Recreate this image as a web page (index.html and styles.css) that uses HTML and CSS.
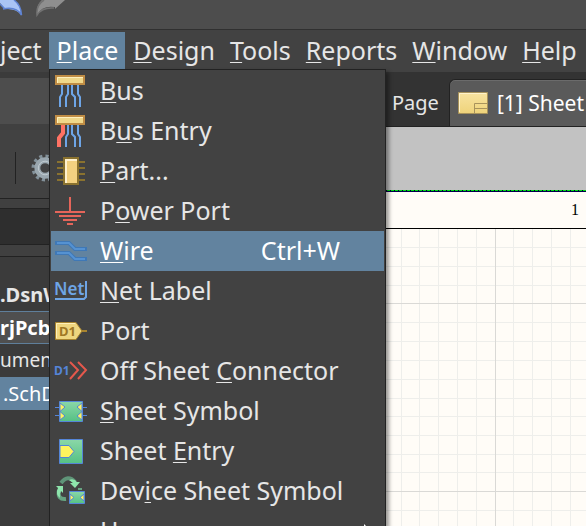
FILE: index.html
```html
<!DOCTYPE html>
<html lang="en">
<head>
<meta charset="utf-8">
<title>Schematic editor</title>
<link rel="stylesheet" href="styles.css">
</head>
<body>
<header class="toolbar">
  <svg class="history" width="70" height="29" viewBox="0 0 70 29" aria-hidden="true">
    <path d="M0 0H14Q21 5 21.500 15Q16 8 5 9L0 3Z" fill="#a9c4f5"/>
    <path d="M14 0Q21 5 21.500 15Q16 6 3 9M5 9L0 4" fill="none" stroke="#5f83d3" stroke-width="1.500"/>
    <path d="M42 0H65L55 9V7Q42 5 37 15Q36 5 42 0Z" fill="#8f8f8f"/>
    <path d="M44 0Q36 5 37 15Q42 7 54 8" fill="none" stroke="#727272" stroke-width="1.500"/>
  </svg>
</header>
<nav class="menubar">
  <button class="menu-title">je<u>c</u>t</button>
  <button class="menu-title open"><u>P</u>lace</button>
  <button class="menu-title"><u>D</u>esign</button>
  <button class="menu-title"><u>T</u>ools</button>
  <button class="menu-title"><u>R</u>eports</button>
  <button class="menu-title"><u>W</u>indow</button>
  <button class="menu-title"><u>H</u>elp</button>
</nav>
<main class="workspace">
  <aside class="projects">
    <div class="panel-title"></div>
    <div class="panel-tools">
      <svg width="34" height="32" viewBox="0 0 34 32" aria-hidden="true">
        <circle cx="30" cy="16" r="11.500" fill="none" stroke="#83919a" stroke-width="5" stroke-dasharray="3 3.020"/>
        <circle cx="30" cy="16" r="8" fill="none" stroke="#9aa7af" stroke-width="6"/>
        <circle cx="30" cy="16" r="7" fill="none" stroke="#c1cbd1" stroke-width="1"/>
      </svg>
    </div>
    <div class="panel-search"></div>
    <div class="panel-strip"></div>
    <ul class="tree">
      <li class="strong">.DsnW</li>
      <li class="strong project">rjPcb</li>
      <li class="folder">ument</li>
      <li class="selected">.SchD</li>
    </ul>
  </aside>
  <section class="editor">
    <div class="tabs">
      <button class="tab">Page</button>
      <button class="tab active">
        <svg width="30" height="22" viewBox="0 0 30 22" aria-hidden="true">
          <defs><linearGradient id="sheet" x2="0" y2="1"><stop stop-color="#f7e3a1"/><stop offset="1" stop-color="#efd37a"/></linearGradient></defs>
          <path d="M.5 .5H29.500V21.500H.5Z" fill="url(#sheet)" stroke="#a8935c"/>
          <path d="M1.500 20V1.500H28" fill="none" stroke="#fff3cb"/>
          <path d="M16.500 21V11.500H29M17 16.500H29" fill="none" stroke="#a8935c"/>
        </svg>
        <span>[1] Sheet</span>
      </button>
    </div>
    <div class="desk"></div>
    <div class="zone">1</div>
    <svg class="grid" aria-hidden="true">
      <path class="minor" d="M15.500 0V400M33.500 0V400M52.500 0V400M71.500 0V400M90.500 0V400M127.500 0V400M146.500 0V400M165.500 0V400M184.500 0V400M0 18.500H400M0 37.500H400M0 56.500H400M0 93.500H400M0 112.500H400M0 131.500H400M0 150.500H400M0 169.500H400M0 187.500H400M0 206.500H400M0 225.500H400M0 243.500H400M0 281.500H400"/>
      <path class="major" d="M109.500 0V400M0 74.500H400M0 262.500H400"/>
    </svg>
  </section>
</main>
<div class="menu" role="menu">
  <button class="item" role="menuitem">
    <svg class="icon" viewBox="0 0 32 32" aria-hidden="true"><path id="bar" d="M1 1H29V9H1Z" fill="#f0d88a" stroke="#c08d45" stroke-width="2"/><path d="M2.500 8V2.500H28" fill="none" stroke="#fff0bd"/><g fill="none" stroke="#6ea5e6" stroke-width="2"><path d="M7 10V19L5 22V32M13 10V19L11 22V32"/><path d="M17 10V19L20 22V32M23 10V19L25 22V32"/></g></svg>
    <span class="label"><u>B</u>us</span></button>
  <button class="item" role="menuitem">
    <svg class="icon" viewBox="0 0 32 32" aria-hidden="true"><use href="#bar"/><path d="M2.500 8V2.500H28" fill="none" stroke="#fff0bd"/><g fill="none" stroke="#6ea5e6" stroke-width="2"><path d="M13 10V19L11 22V32"/><path d="M17 10V19L20 22V32M23 10V19L25 22V32"/></g><path d="M8 10V18L4 23V32" fill="none" stroke="#ff7264" stroke-width="4"/></svg>
    <span class="label">B<u>u</u>s Entry</span></button>
  <button class="item" role="menuitem">
    <svg class="icon" viewBox="0 0 32 32" aria-hidden="true"><path d="M2 7H30M2 13H30M2 19H30M2 25H30" stroke="#8a722f" stroke-width="2"/><path d="M9 3H23V29H9Z" fill="#f3d180" stroke="#8a722f" stroke-width="2"/><path d="M11 28V5H22" fill="none" stroke="#fff1cf" stroke-width="2"/></svg>
    <span class="label"><u>P</u>art...</span></button>
  <button class="item" role="menuitem">
    <svg class="icon" viewBox="0 0 32 32" aria-hidden="true"><path d="M15 2V16M0 17H30M4 21H26M8 25H22M12 29H18" fill="none" stroke="#e5655a" stroke-width="2"/></svg>
    <span class="label">P<u>o</u>wer Port</span></button>
  <button class="item hot" role="menuitem">
    <svg class="icon" viewBox="0 0 32 32" aria-hidden="true"><g fill="none" stroke="#3f78b6" stroke-width="4"><path d="M0 8H14L20 14H32M0 18H14L20 24H32"/></g><g fill="none" stroke="#5592d2" stroke-width="2"><path d="M2 8H14L20 14H30M2 18H14L20 24H30"/></g></svg>
    <span class="label"><u>W</u>ire</span><kbd>Ctrl+W</kbd></button>
  <button class="item" role="menuitem">
    <svg class="icon" viewBox="0 0 32 32" aria-hidden="true"><text class="net" x="-1" y="20">Net</text><path d="M0 24H29L31 22V6" fill="none" stroke="#6ea5e6" stroke-width="2"/></svg>
    <span class="label"><u>N</u>et Label</span></button>
  <button class="item" role="menuitem">
    <svg class="icon" viewBox="0 0 32 32" aria-hidden="true"><path d="M26 16H32" stroke="#a8842f" stroke-width="2"/><path d="M.5 7.500H21L27 16L21 24.500H.5Z" fill="#efd67f" stroke="#a8842f"/><path d="M1.500 23V8.500H20" fill="none" stroke="#fff0b8"/><text class="pin" x="4" y="21">D1</text></svg>
    <span class="label">Port</span></button>
  <button class="item" role="menuitem">
    <svg class="icon" viewBox="0 0 32 32" aria-hidden="true"><text class="ref" x="-1" y="20">D1</text><path d="M15 7L23 15L15 24M23 7L31 15L23 24" fill="none" stroke="#e5584c" stroke-width="2"/></svg>
    <span class="label">Off Sheet <u>C</u>onnector</span></button>
  <button class="item" role="menuitem">
    <svg class="icon" viewBox="0 0 32 32" aria-hidden="true"><defs><linearGradient id="green" x2="0" y2="1"><stop stop-color="#8bd7a8"/><stop offset="1" stop-color="#55c184"/></linearGradient></defs><path d="M0 12.500H32M0 20.500H32" stroke="#5585d8"/><path d="M4.500 6.500H27.500V26.500H4.500Z" fill="url(#green)" stroke="#5585d8"/><path d="M5 8L10 12L5 16.500L10 21L5 25ZM27 8L22 12L27 16.500L22 21L27 25Z" fill="#fff45e" stroke="#5585d8"/></svg>
    <span class="label"><u>S</u>heet Symbol</span></button>
  <button class="item" role="menuitem">
    <svg class="icon" viewBox="0 0 32 32" aria-hidden="true"><path d="M4.500 4.500H27.500V28.500H4.500Z" fill="url(#green)" stroke="#5585d8"/><path d="M5 10.500H14L19 16.500L14 22.500H5Z" fill="#fff45e" stroke="#5585d8"/></svg>
    <span class="label">Sheet <u>E</u>ntry</span></button>
  <button class="item" role="menuitem">
    <svg class="icon" viewBox="0 0 32 32" aria-hidden="true"><path d="M6 8Q13 -1 20 7" fill="none" stroke="#5f9478" stroke-width="4"/><path d="M14 5Q19 3 22 7H25L20 13L15 8H18Z" fill="#8ee5ac"/><path d="M11 24Q2 25 4 15" fill="none" stroke="#66a381" stroke-width="4"/><path d="M1 11H8V18L6 16Q4 19 5 23Q0 19 3 13Z" fill="#8ee5ac"/><path d="M14.500 16.500H29.500V28.500H14.500Z" fill="url(#green)" stroke="#5585d8"/><path d="M15 19L19 22.500L15 26ZM29 19L25 22.500L29 26Z" fill="#fff45e" stroke="#5585d8"/><path d="M23 14H27" stroke="#66a381" stroke-width="2"/></svg>
    <span class="label">Dev<u>i</u>ce Sheet Symbol</span></button>
  <button class="item" role="menuitem">
    <span class="icon"></span>
    <span class="label">H</span></button>
</div>
<svg class="pointer" width="12" height="18" viewBox="0 0 12 18" aria-hidden="true"><path d="M0 0V16L4 12L7 18L9 17L6 11H11Z" fill="#fff"/></svg>
</body>
</html>
```
FILE: styles.css
```css
* { box-sizing: border-box; }

body {
  margin: 0;
  height: 100vh;
  overflow: hidden;
  display: flex;
  flex-direction: column;
  position: relative;
  background: #333;
  color: #e6e6e6;
  font-family: "Noto Sans", sans-serif;
  font-size: 25px;
}

button {
  border: 0;
  margin: 0;
  background: none;
  color: inherit;
  font: inherit;
  text-align: left;
  white-space: nowrap;
}

svg { display: block; flex: none; }

u { text-decoration-thickness: 1px; text-underline-offset: 2px; text-decoration-skip-ink: none; }

.toolbar { height: 30px; background: #4d4d4d; border-bottom: 1px solid #303030; }

.menubar {
  display: flex;
  height: 42px;
  padding-top: 2px;
  background: #424242;
}
.menu-title { height: 37px; padding: 0 7px 0 8px; line-height: 37px; }
.menu-title:first-child { padding-left: 0; }
.menu-title.open { background: #62839f; color: #fff; }

.workspace { flex: 1; min-height: 0; display: flex; }

.projects { flex: 0 0 386px; overflow: hidden; background: #3b3b3b; font-size: 20px; }
.panel-title { height: 52px; margin-top: 6px; background: #4d4d4d; border-bottom: 6px solid #404040; }
.panel-tools {
  display: flex;
  align-items: center;
  height: 69px;
  padding: 8px 0 0 15px;
  background: #424242;
  border-bottom: 1px solid #222;
}
.panel-tools svg { border-left: 1px solid #222; }
.panel-search {
  height: 46px;
  background: #2e2e2e;
  border-top: 9px solid #404040;
  border-bottom: 1px solid #222;
  box-shadow: inset 0 1px #222;
}
.panel-strip { height: 12px; border-bottom: 1px solid #222; background: #404040; }

.tree { margin: 21px 0 0; padding: 0; list-style: none; }
.tree li { height: 33px; line-height: 33px; white-space: nowrap; }
.tree .strong { font-weight: 700; }
.tree .project { background: #4f4f4f; border: solid #5f7f9b; border-width: 1px 0; color: #fff; line-height: 31px; }
.tree .folder { font-size: 19px; }
.tree .selected { padding-left: 3px; background: #62839f; color: #fff; }

.editor { flex: 1; min-width: 0; display: flex; flex-direction: column; background: #fffcf7; }
.tabs { display: flex; height: 55px; padding-top: 7px; background: #333; border-bottom: 1px solid #222; }
.tab { flex: none; height: 47px; padding: 0 10px 0 6px; font-size: 20px; line-height: 47px; }
.tab.active {
  flex: 1;
  min-width: 0;
  display: flex;
  align-items: center;
  gap: 9px;
  padding: 0 0 0 8px;
  border: 1px solid #222;
  border-width: 1px 0 0 1px;
  border-radius: 6px 0 0 0;
  background: #5a5a5a;
  box-shadow: inset 0 1px #6b6b6b;
  color: #fff;
  font-size: 21px;
  line-height: 45px;
}
.desk {
  height: 64px;
  background: repeating-linear-gradient(90deg, #00003c 0 1px, #00e010 1px 4px) bottom / 100% 1px no-repeat #c2c2c2;
}
.zone {
  height: 38px;
  padding-right: 7px;
  border-top: 1px solid #00004a;
  border-bottom: 1px solid #000;
  color: #000;
  font: 16px/36px "Liberation Serif", serif;
  text-align: right;
}
.grid { flex: 1; width: 100%; min-height: 0; overflow: hidden; }
.grid path { fill: none; shape-rendering: crispEdges; }
.minor { stroke: #eeeeeb; }
.major { stroke: #dad9d6; }

.menu {
  position: absolute;
  top: 69px;
  left: 49px;
  width: 337px;
  height: calc(100vh - 69px);
  overflow: hidden;
  padding: 1px;
  border: 1px solid #222;
  border-bottom: 0;
  background: #424242;
  box-shadow: 3px 3px 4px rgba(0, 0, 0, .4);
}
.item { display: flex; align-items: center; width: 100%; height: 40px; padding: 0 44px 0 4px; line-height: 38px; }
.item.hot { background: #62839f; color: #fff; }
.icon { flex: none; width: 32px; height: 32px; margin-right: 13px; overflow: visible; }
.label { flex: 1; height: 40px; }
kbd { height: 40px; font: inherit; }
.net { font: 600 17px "Noto Sans", sans-serif; fill: #6ea5e6; }
.pin { font: 700 13px "Noto Sans", sans-serif; fill: #a07824; }
.ref { font: 700 12px "Noto Sans", sans-serif; fill: #5585d8; }

.pointer { position: absolute; top: 524px; left: 364px; }
```
